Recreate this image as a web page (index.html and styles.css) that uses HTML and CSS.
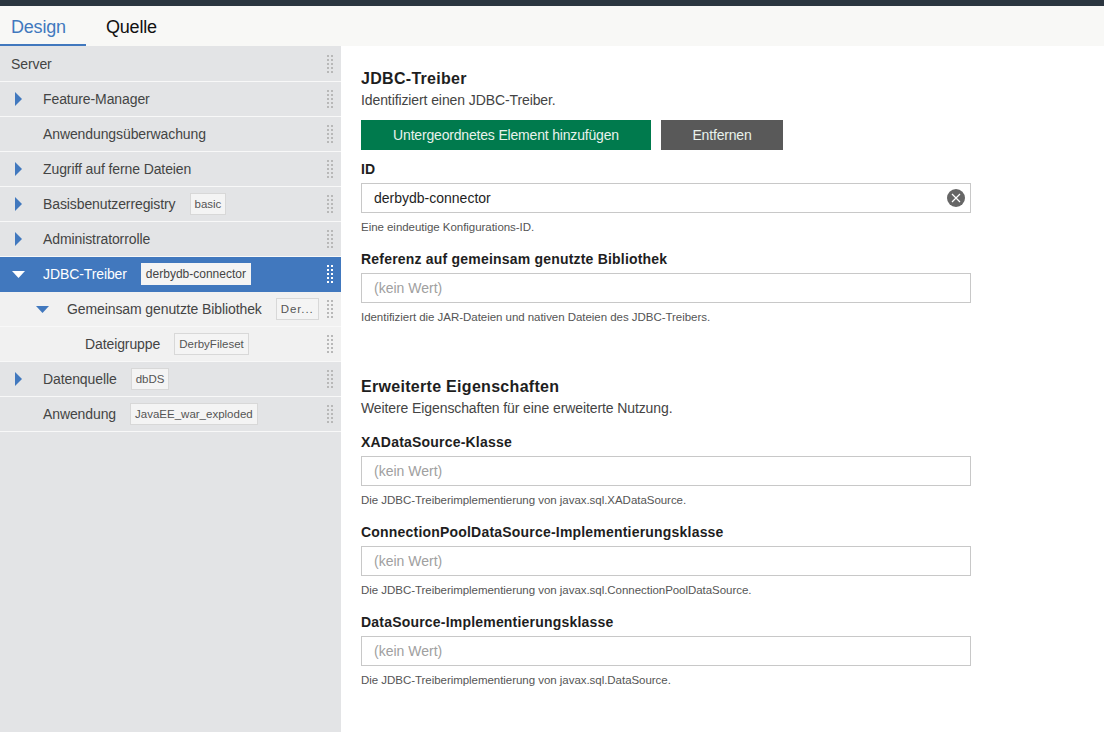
FILE: index.html
```html
<!DOCTYPE html>
<html>
<head>
    <title>Server Config</title>
    <link rel="stylesheet" href="styles.css">
</head>
<body>
    <div class="topbar"></div>
    <div class="tabs">
        <div class="tab active">Design</div>
        <div class="tab">Quelle</div>
    </div>
    <div class="main">
        <div class="tree">
            <div class="row"><span class="name">Server</span><i class="grip"></i></div>
            <div class="row"><svg class="arrow" viewBox="0 0 32 14"><path d="M4 0l7 7-7 7z"/></svg><span class="name">Feature-Manager</span><i class="grip"></i></div>
            <div class="row"><span class="arrow"></span><span class="name">Anwendungsüberwachung</span><i class="grip"></i></div>
            <div class="row"><svg class="arrow" viewBox="0 0 32 14"><path d="M4 0l7 7-7 7z"/></svg><span class="name">Zugriff auf ferne Dateien</span><i class="grip"></i></div>
            <div class="row"><svg class="arrow" viewBox="0 0 32 14"><path d="M4 0l7 7-7 7z"/></svg><span class="name">Basisbenutzerregistry</span><span class="tag">basic</span><i class="grip"></i></div>
            <div class="row"><svg class="arrow" viewBox="0 0 32 14"><path d="M4 0l7 7-7 7z"/></svg><span class="name">Administratorrolle</span><i class="grip"></i></div>
            <div class="row selected"><svg class="arrow" viewBox="0 0 32 14"><path d="M1 4h13l-6.500 7z"/></svg><span class="name">JDBC-Treiber</span><span class="tag">derbydb-connector</span><i class="grip"></i></div>
            <div class="row child level1"><svg class="arrow" viewBox="0 0 32 14"><path d="M1 4h13l-6.500 7z"/></svg><span class="name">Gemeinsam genutzte Bibliothek</span><span class="tag short">Der...</span><i class="grip"></i></div>
            <div class="row child level2"><span class="name">Dateigruppe</span><span class="tag">DerbyFileset</span><i class="grip"></i></div>
            <div class="row"><svg class="arrow" viewBox="0 0 32 14"><path d="M4 0l7 7-7 7z"/></svg><span class="name">Datenquelle</span><span class="tag">dbDS</span><i class="grip"></i></div>
            <div class="row"><span class="arrow"></span><span class="name">Anwendung</span><span class="tag">JavaEE_war_exploded</span><i class="grip"></i></div>
        </div>
        <div class="form">
            <h2>JDBC-Treiber</h2>
            <p class="desc">Identifiziert einen JDBC-Treiber.</p>
            <div class="buttons">
                <button class="add">Untergeordnetes Element hinzufügen</button>
                <button class="remove">Entfernen</button>
            </div>
            <div class="field">
                <label>ID</label>
                <div class="input">
                    <input type="text" value="derbydb-connector">
                    <svg class="clear" viewBox="0 0 18 18"><circle cx="9" cy="9" r="9"/><path d="M5 5l8 8M13 5l-8 8"/></svg>
                </div>
                <p class="hint">Eine eindeutige Konfigurations-ID.</p>
            </div>
            <div class="field">
                <label>Referenz auf gemeinsam genutzte Bibliothek</label>
                <div class="input"><input type="text" placeholder="(kein Wert)"></div>
                <p class="hint">Identifiziert die JAR-Dateien und nativen Dateien des JDBC-Treibers.</p>
            </div>

            <h2 class="advanced">Erweiterte Eigenschaften</h2>
            <p class="desc">Weitere Eigenschaften für eine erweiterte Nutzung.</p>
            <div class="field first">
                <label>XADataSource-Klasse</label>
                <div class="input"><input type="text" placeholder="(kein Wert)"></div>
                <p class="hint">Die JDBC-Treiberimplementierung von javax.sql.XADataSource.</p>
            </div>
            <div class="field">
                <label>ConnectionPoolDataSource-Implementierungsklasse</label>
                <div class="input"><input type="text" placeholder="(kein Wert)"></div>
                <p class="hint">Die JDBC-Treiberimplementierung von javax.sql.ConnectionPoolDataSource.</p>
            </div>
            <div class="field">
                <label>DataSource-Implementierungsklasse</label>
                <div class="input"><input type="text" placeholder="(kein Wert)"></div>
                <p class="hint">Die JDBC-Treiberimplementierung von javax.sql.DataSource.</p>
            </div>
        </div>
    </div>
</body>
</html>
```

FILE: styles.css
```css
html, body {
    height: 100%;
}
body {
    margin: 0;
    display: flex;
    flex-direction: column;
    overflow: hidden;
    background: #fff;
    font-family: "Liberation Sans", Arial, sans-serif;
    color: #333;
}
.topbar {
    height: 6px;
    background: #2b3640;
}
.tabs {
    display: flex;
    height: 40px;
    background: #f8f8f6;
}
.tab {
    width: 86px;
    box-sizing: border-box;
    padding: 9px 0 0 11px;
    font-size: 18px;
    line-height: 24px;
    letter-spacing: -0.2px;
    color: #111;
}
.tab + .tab {
    padding-left: 20px;
}
.tab.active {
    color: #4178be;
    border-bottom: 2px solid #4178be;
}
.main {
    flex: 1;
    display: flex;
    min-height: 0;
}
.tree {
    width: 341px;
    padding-top: 1px;
    box-sizing: border-box;
    background: #e3e4e6;
}
.row {
    display: flex;
    align-items: center;
    height: 34px;
    padding-left: 11px;
    border-bottom: 1px solid #f8f8f8;
    font-size: 14px;
    letter-spacing: -0.1px;
    color: #444;
}
.arrow {
    width: 32px;
    height: 14px;
    flex: none;
    fill: #4178be;
}
.tag {
    margin-left: 14px;
    padding: 0 4px;
    height: 20px;
    line-height: 20px;
    font-size: 11.500px;
    letter-spacing: 0;
    background: #f4f4f4;
    border: 1px solid #d8d8d8;
    color: #555;
    white-space: nowrap;
}
.tag.short {
    letter-spacing: 0.9px;
}
.grip {
    width: 6px;
    height: 18px;
    margin-left: auto;
    margin-right: 8px;
    flex: none;
    background-image: radial-gradient(circle at 1px 1px, #b8b8b8 1.200px, transparent 1.300px);
    background-size: 4px 4px;
}
.selected {
    background: #4178be;
    border-bottom-color: #4178be;
    color: #fff;
}
.selected .arrow {
    fill: #fff;
}
.selected .tag {
    font-size: 12px;
    color: #444;
    border-color: #f4f4f4;
}
.selected .grip {
    background-image: radial-gradient(circle at 1px 1px, #fff 1.200px, transparent 1.300px);
}
.child {
    background: #f1f1f1;
}
.level1 {
    padding-left: 35px;
}
.level2 {
    padding-left: 85px;
}
.form {
    flex: 1;
    padding: 23px 0 0 20px;
}
h2 {
    margin: 0;
    font-size: 16px;
    line-height: 20px;
    font-weight: bold;
    letter-spacing: 0.3px;
    color: #1e1e1e;
}
.desc {
    margin: 2px 0 0;
    font-size: 14px;
    line-height: 18px;
    letter-spacing: -0.1px;
    color: #444;
}
.buttons {
    display: flex;
    gap: 10px;
    margin-top: 11px;
}
button {
    height: 30px;
    border: none;
    padding: 0;
    font-family: inherit;
    font-size: 14px;
    letter-spacing: -0.18px;
    color: #e8f2ec;
}
.add {
    width: 290px;
    background: #007a4d;
}
.remove {
    width: 122px;
    background: #595959;
}
.field {
    margin-top: 10px;
    width: 610px;
}
.field + .field {
    margin-top: 15px;
}
.field.first {
    margin-top: 16px;
}
label {
    display: block;
    font-size: 14px;
    line-height: 18px;
    font-weight: bold;
    letter-spacing: 0.2px;
    color: #1e1e1e;
}
.input {
    position: relative;
    margin-top: 5px;
}
input {
    display: block;
    width: 100%;
    height: 30px;
    box-sizing: border-box;
    border: 1px solid #c8c8c8;
    padding: 0 36px 0 12px;
    font-family: inherit;
    font-size: 14px;
    color: #1e1e1e;
    outline: none;
}
input::placeholder {
    color: #a0a0a0;
}
.clear {
    position: absolute;
    right: 6px;
    top: 6px;
    width: 18px;
    height: 18px;
    fill: #666;
}
.clear path {
    stroke: #fff;
    stroke-width: 1.200;
}
.hint {
    margin: 6px 0 0;
    font-size: 11.500px;
    line-height: 16px;
    letter-spacing: -0.04px;
    color: #555;
}
h2.advanced {
    margin-top: 52px;
}
```
